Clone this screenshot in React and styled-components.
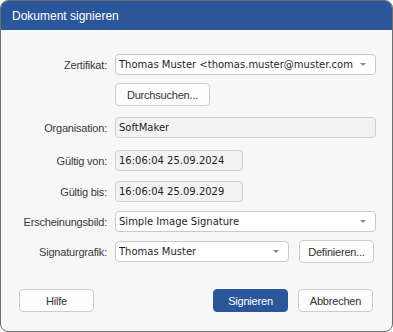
import React from 'react';
import styled, { createGlobalStyle } from 'styled-components';

const GlobalStyle = createGlobalStyle`
	html, body {
		margin: 0;
		padding: 0;
		background: #ffffff;
	}
	* {
		box-sizing: border-box;
	}
`;

export default function App() {
	return (
		<>
			<GlobalStyle />
			<Window>
				<TitleBar>Dokument signieren</TitleBar>
				<Body>
					<Row $top={24}>
						<Label>Zertifikat:</Label>
						<Select $width={261}>
							<FieldText>Thomas Muster &lt;thomas.muster@muster.com</FieldText>
							<Arrow />
						</Select>
					</Row>
					<Row $top={8}>
						<span />
						<Button $width={95}>Durchsuchen...</Button>
					</Row>
					<Row $top={11}>
						<Label>Organisation:</Label>
						<Field $width={261}>
							<FieldText>SoftMaker</FieldText>
						</Field>
					</Row>
					<Row $top={12}>
						<Label>Gültig von:</Label>
						<Field $width={128}>
							<FieldText>16:06:04 25.09.2024</FieldText>
						</Field>
					</Row>
					<Row $top={10}>
						<Label>Gültig bis:</Label>
						<Field $width={128}>
							<FieldText>16:06:04 25.09.2029</FieldText>
						</Field>
					</Row>
					<Row $top={9}>
						<Label>Erscheinungsbild:</Label>
						<Select $width={261}>
							<FieldText>Simple Image Signature</FieldText>
							<Arrow />
						</Select>
					</Row>
					<Row $top={8}>
						<Label>Signaturgrafik:</Label>
						<Inline>
							<Select $width={174}>
								<FieldText>Thomas Muster</FieldText>
								<Arrow />
							</Select>
							<Button $width={75}>Definieren...</Button>
						</Inline>
					</Row>
					<Footer>
						<Button $width={75}>Hilfe</Button>
						<Actions>
							<Button $width={75} $primary>
								Signieren
							</Button>
							<Button $width={75}>Abbrechen</Button>
						</Actions>
					</Footer>
				</Body>
			</Window>
		</>
	);
}

const Window = styled.div`
	width: 393px;
	height: 332px;
	border: 1px solid #6e6e6e;
	border-radius: 8px;
	overflow: hidden;
	background: #f7f7f7;
	display: flex;
	flex-direction: column;
`;

const TitleBar = styled.div`
	height: 29px;
	background: #2b579a;
	color: #ffffff;
	font-family: 'Liberation Sans', Arial, sans-serif;
	font-size: 12px;
	line-height: 30px;
	padding-left: 11px;
`;

const Body = styled.div`
	flex: 1;
	display: flex;
	flex-direction: column;
	padding-right: 16px;
`;

const Row = styled.div`
	display: grid;
	grid-template-columns: 106px 1fr;
	column-gap: 8px;
	align-items: center;
	margin-top: ${p => p.$top}px;
`;

const Label = styled.label`
	text-align: right;
	font-family: 'Liberation Sans', Arial, sans-serif;
	font-size: 11px;
	letter-spacing: -0.2px;
	color: #3a3a3a;
`;

const Field = styled.div`
	width: ${p => p.$width}px;
	height: 21px;
	border: 1px solid #cfcfcf;
	border-radius: 4px;
	background: #f2f2f2;
	display: flex;
	align-items: center;
	padding: 0 3px;
	overflow: hidden;
`;

const Select = styled(Field)`
	background: #ffffff;
	border-color: #c9c9c9;
	position: relative;
	padding-right: 18px;
`;

const FieldText = styled.span`
	font-family: 'DejaVu Sans', Verdana, sans-serif;
	font-size: 10px;
	color: #1f1f2b;
	white-space: nowrap;
	overflow: hidden;
`;

const Arrow = styled.span`
	position: absolute;
	right: 9px;
	top: 8px;
	width: 0;
	height: 0;
	border-left: 3px solid transparent;
	border-right: 3px solid transparent;
	border-top: 3px solid #8a8a8a;
`;

const Inline = styled.div`
	display: flex;
	gap: 10px;
	align-items: center;
`;

const Button = styled.button`
	width: ${p => p.$width}px;
	height: 23px;
	padding: 0;
	border: 1px solid ${p => (p.$primary ? '#2b579a' : '#cccccc')};
	border-radius: 4px;
	background: ${p => (p.$primary ? '#2b579a' : '#fdfdfd')};
	color: ${p => (p.$primary ? '#ffffff' : '#333333')};
	font-family: 'Liberation Sans', Arial, sans-serif;
	font-size: 11px;
	letter-spacing: -0.2px;
`;

const Footer = styled.div`
	display: flex;
	justify-content: space-between;
	margin-top: 26px;
	padding-left: 18px;
	padding-right: 3px;
`;

const Actions = styled.div`
	display: flex;
	gap: 10px;
`;
